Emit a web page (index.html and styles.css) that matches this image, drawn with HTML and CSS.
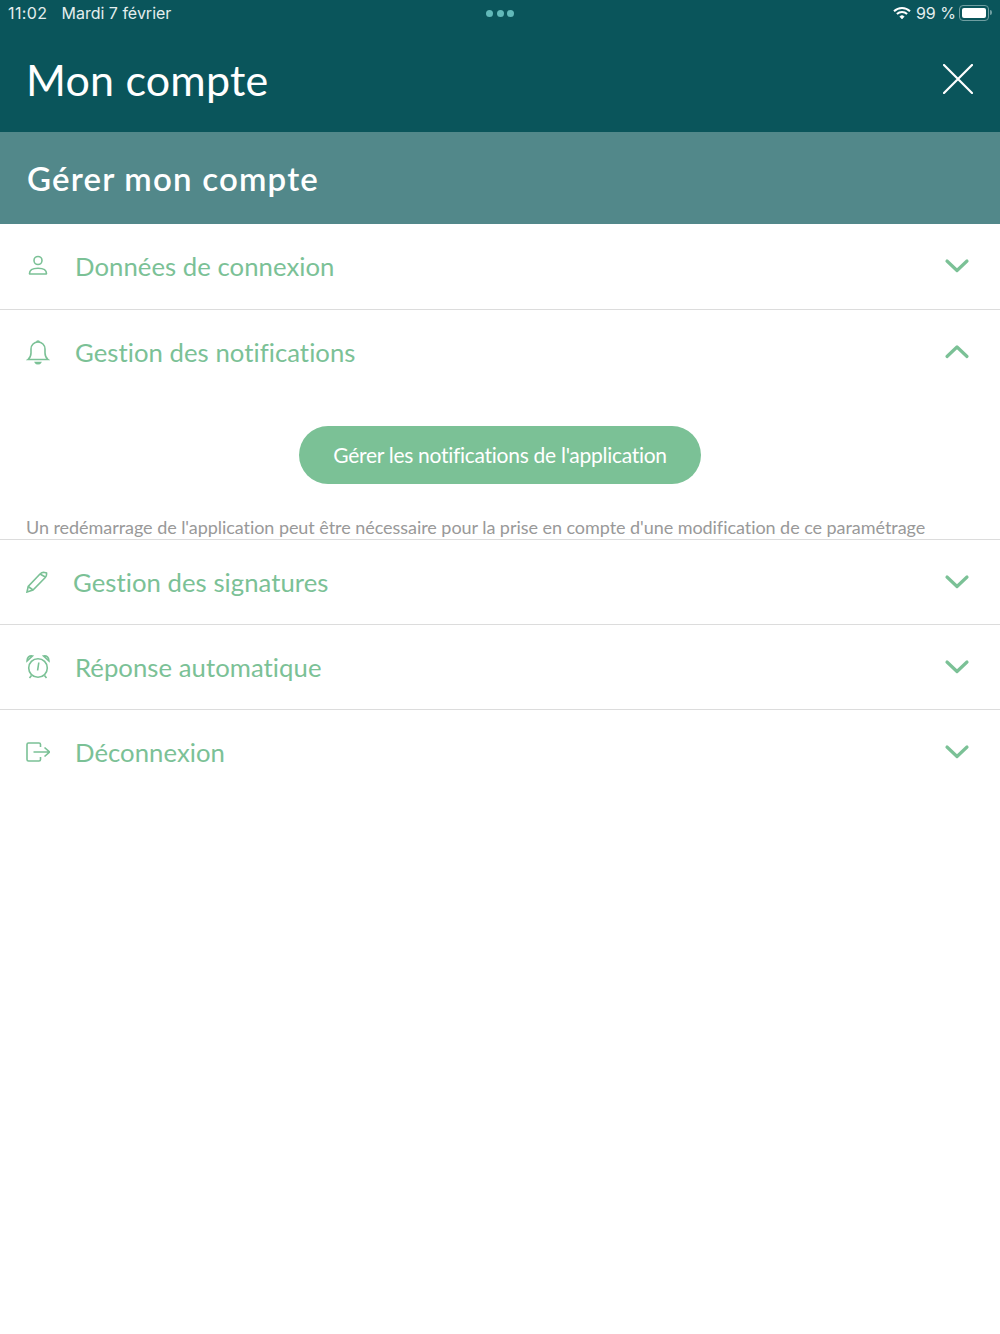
FILE: index.html
```html
<!DOCTYPE html>
<html lang="fr">
<head>
  <meta charset="UTF-8">
  <meta name="viewport" content="width=device-width, initial-scale=1.0">
  <title>Mon compte</title>
  <link rel="stylesheet" href="styles.css">
</head>
<body>
  <!-- Header -->
  <header class="top">
    <div class="status-bar">
      <div class="status-left">
        <span class="status-time">11:02</span>
        <span>Mardi 7 février</span>
      </div>
      <div class="status-dots"><i></i><i></i><i></i></div>
      <div class="status-right">
        <svg class="wifi" width="18" height="14" viewBox="0 0 18 14">
          <path d="M1 5.2a11.5 11.5 0 0 1 16 0" fill="none" stroke="#fff" stroke-width="2"/>
          <path d="M3.9 8a7.4 7.4 0 0 1 10.2 0" fill="none" stroke="#fff" stroke-width="2"/>
          <path d="M6.8 10.6a3.2 3.2 0 0 1 4.4 0L9 13z" fill="#fff" stroke="#fff" stroke-width="0.6"/>
        </svg>
        <span>99 %</span>
        <div class="battery"><div class="battery-level"></div></div>
        <div class="battery-tip"></div>
      </div>
    </div>
    <div class="title-row">
      <h1>Mon compte</h1>
      <svg class="close" width="30" height="30" viewBox="0 0 30 30">
        <path d="M1 1l28 28M29 1L1 29" stroke="#fff" stroke-width="2.2" stroke-linecap="round"/>
      </svg>
    </div>
  </header>

  <h2 class="section-title">Gérer mon compte</h2>

  <!-- Account rows -->
  <section class="row row-first">
    <div class="row-head">
      <svg class="row-icon" width="24" height="24" viewBox="0 0 24 24">
        <circle cx="12" cy="6.5" r="4"/>
        <path d="M3.500 19.500c0-3.600 3.800-5.200 8.500-5.200s8.500 1.600 8.500 5.200c0 .3-.2.5-.5.5H4c-.3 0-.5-.2-.5-.5z"/>
      </svg>
      <span class="row-label">Données de connexion</span>
      <svg class="chevron" width="26" height="16" viewBox="0 0 26 16"><path d="M3 3l10 9.500L23 3"/></svg>
    </div>
  </section>

  <section class="row">
    <div class="row-head">
      <svg class="row-icon" width="24" height="26" viewBox="0 0 24 26">
        <path d="M2 20.500c2-1.600 3-3.400 3-6.500V10a7 7 0 0 1 14 0v4c0 3.100 1 4.900 3 6.500z"/>
        <path d="M10.800 3.200c0-1.600 2.400-1.600 2.400 0"/>
        <path d="M9.500 23.500h5c-.8 1.500-4.200 1.500-5 0z"/>
      </svg>
      <span class="row-label">Gestion des notifications</span>
      <svg class="chevron" width="26" height="16" viewBox="0 0 26 16"><path d="M3 12.500L13 3l10 9.500"/></svg>
    </div>
    <div class="row-body">
      <button class="app-button" type="button">Gérer les notifications de l'application</button>
      <p class="hint">Un redémarrage de l'application peut être nécessaire pour la prise en compte d'une modification de ce paramétrage</p>
    </div>
  </section>

  <section class="row">
    <div class="row-head">
      <svg class="row-icon" width="22" height="22" viewBox="0 0 22 22">
        <path d="M1 21l1.200-5.500L14 3c1.200-1.200 2.800-1.800 4.500-1.500l2 .5c.3 1.500-.2 3.300-1.200 4.500L7 19z"/>
        <path d="M2.200 15.500L7 19M14 3l5.300 3"/>
      </svg>
      <span class="row-label">Gestion des signatures</span>
      <svg class="chevron" width="26" height="16" viewBox="0 0 26 16"><path d="M3 3l10 9.500L23 3"/></svg>
    </div>
  </section>

  <section class="row">
    <div class="row-head">
      <svg class="row-icon" width="24" height="26" viewBox="0 0 24 26">
        <circle cx="12" cy="14" r="9.300"/>
        <path d="M12.800 8.500l-1.200 8"/>
        <path d="M1 7C.8 3.500 3.500 1.300 6.500 2zM23 7c.2-3.500-2.500-5.700-5.500-5zM5.500 21.500l-2 2.500M18.500 21.500l2 2.500"/>
      </svg>
      <span class="row-label">Réponse automatique</span>
      <svg class="chevron" width="26" height="16" viewBox="0 0 26 16"><path d="M3 3l10 9.500L23 3"/></svg>
    </div>
  </section>

  <section class="row row-last">
    <div class="row-head">
      <svg class="row-icon" width="24" height="24" viewBox="0 0 24 24">
        <path d="M14.500 7V4.500c0-1-.6-1.500-1.500-1.500H2.500C1.500 3 1 3.500 1 4.500v15c0 1 .5 1.500 1.500 1.500H13c.9 0 1.500-.5 1.500-1.500V17"/>
        <path d="M7.500 12h16M18.500 7.500L23.500 12l-5 4.500"/>
      </svg>
      <span class="row-label">Déconnexion</span>
      <svg class="chevron" width="26" height="16" viewBox="0 0 26 16"><path d="M3 3l10 9.500L23 3"/></svg>
    </div>
  </section>
</body>
</html>
```

FILE: styles.css
```css
/* Global */
body {
  margin: 0;
  font-family: 'Lato', sans-serif;
  font-variant-ligatures: none;
  background-color: #fff;
  color: #7bc196;
}

/* Header */
.top {
  height: 132px;
  background-color: #0a555b;
  color: #fff;
}

.status-bar {
  position: relative;
  display: flex;
  justify-content: space-between;
  align-items: center;
  height: 25px;
  padding: 0 8px;
  font-family: 'Inter', sans-serif;
  font-size: 16px;
  color: #e4eeee;
}

.status-left {
  display: flex;
  gap: 14px;
}

.status-time {
  letter-spacing: 0.4px;
}

.status-dots {
  position: absolute;
  left: 486px;
  top: 9.5px;
  display: flex;
  gap: 3.5px;
}

.status-dots i {
  width: 7px;
  height: 7px;
  border-radius: 50%;
  background-color: #62b9b9;
}

.status-right {
  display: flex;
  align-items: center;
  gap: 5px;
}

.battery {
  width: 24px;
  height: 10px;
  margin-left: -2px;
  padding: 2px;
  border: 1px solid #6f9ea1;
  border-radius: 4px;
}

.battery-level {
  width: 100%;
  height: 100%;
  background-color: #fff;
  border-radius: 2px;
}

.battery-tip {
  width: 2px;
  height: 5px;
  margin-left: -4px;
  background-color: #6f9ea1;
  border-radius: 0 2px 2px 0;
}

.title-row {
  display: flex;
  justify-content: space-between;
  align-items: center;
  height: 107px;
  padding: 0 27px 0 26px;
}

h1 {
  margin: 2px 0 0;
  font-size: 43px;
  font-weight: 400;
  letter-spacing: 0.2px;
}

/* Sub header */
.section-title {
  margin: 0;
  height: 92px;
  line-height: 92px;
  padding-left: 27px;
  background-color: #52888a;
  color: #fff;
  font-size: 33px;
  font-weight: 600;
  letter-spacing: 1.2px;
}

/* Rows */
.row {
  border-bottom: 1px solid #dcdcdc;
}

.row-first {
  padding-bottom: 1px;
}

.row-last {
  border-bottom: none;
}

.row-head {
  display: flex;
  align-items: center;
  height: 84px;
  padding: 0 30.5px 0 26px;
}

.row-icon {
  flex: none;
  fill: none;
  stroke: #7bc196;
  stroke-width: 1.6;
  margin-right: 25px;
}

.row-label {
  flex: 1;
  font-size: 25.7px;
  letter-spacing: 0.05px;
}

.chevron {
  margin-bottom: 1px;
  fill: none;
  stroke: #7bc196;
  stroke-width: 3.2;
  stroke-linecap: round;
  stroke-linejoin: round;
}

.row-body {
  display: flex;
  flex-direction: column;
  align-items: center;
  height: 145px;
  padding: 0 26px;
}

.app-button {
  width: 402px;
  height: 58px;
  margin-top: 32px;
  padding-bottom: 3px;
  border: none;
  border-radius: 29px;
  background-color: #7bc196;
  color: #fff;
  font-family: inherit;
  font-size: 21px;
  letter-spacing: -0.28px;
}

.hint {
  align-self: flex-start;
  margin: 32px 0 0;
  color: #999;
  font-size: 18px;
  letter-spacing: -0.05px;
  white-space: nowrap;
}
```
